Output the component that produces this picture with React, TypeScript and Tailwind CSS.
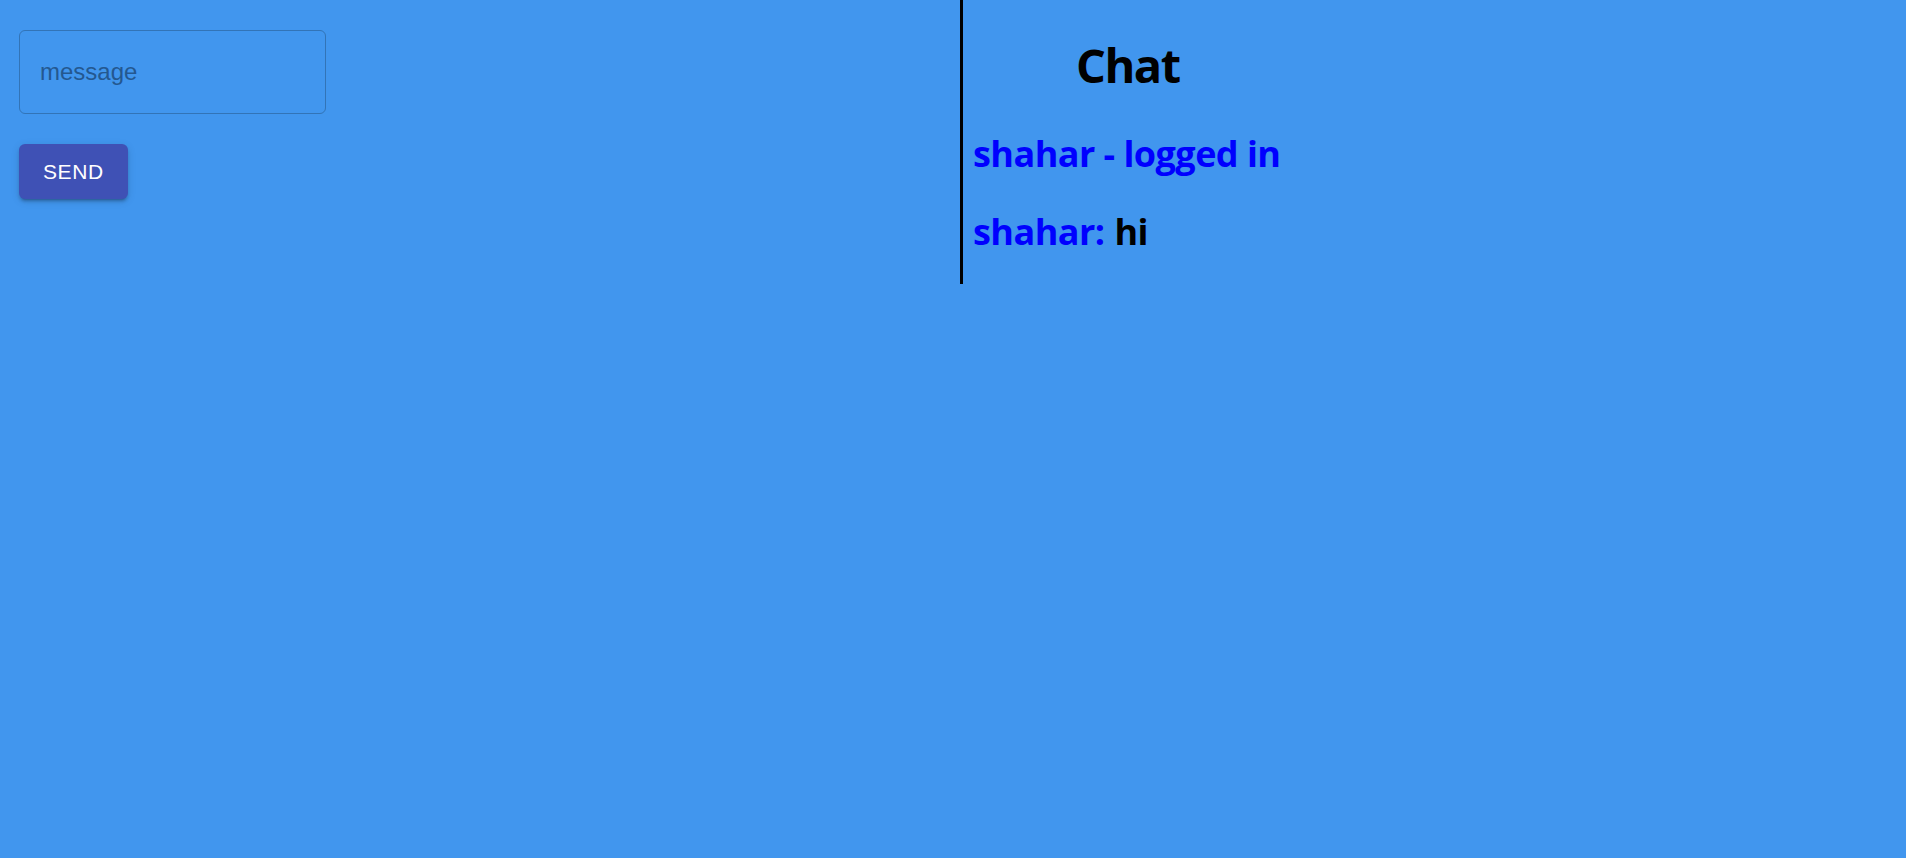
import { useState } from 'react'

export default function App() {
  const [message, setMessage] = useState('')

  return (
    <div className="min-h-screen bg-[#4196ee] flex items-start">
      {/* left: compose */}
      <div className="w-[960px] shrink-0 pt-[30px] pl-[19px] flex flex-col items-start gap-[30px]">
        <input
          value={message}
          onChange={(e) => setMessage(e.target.value)}
          placeholder="message"
          className="w-[307px] h-[84px] rounded-[6px] border border-[#3274b7] bg-transparent pl-[20px] text-[24px] text-black placeholder:text-[#245890] outline-none font-['Liberation_Sans',Arial,sans-serif]"
        />
        <button className="h-[55px] px-[24px] rounded-[6px] bg-[#3f51b5] text-white text-[21px] tracking-[0.6px] uppercase font-['Liberation_Sans',Arial,sans-serif] shadow-[0_4px_2px_-3px_rgba(0,0,0,0.2),0_3px_3px_0_rgba(0,0,0,0.14),0_2px_8px_0_rgba(0,0,0,0.12)]">
          Send
        </button>
      </div>

      {/* right: chat log */}
      <div className="border-l-[3px] border-black pl-[10px] pb-[30px] font-['Open_Sans',sans-serif] font-bold">
        <h1 className="mt-[37px] ml-[103px] text-[47px] leading-[56px] tracking-[-1.5px] text-black">Chat</h1>
        <h2 className="mt-[39px] text-[36px] leading-[44px] tracking-[-0.55px] text-[#0000ff]">shahar - logged in</h2>
        <h2 className="mt-[34px] text-[36px] leading-[44px] tracking-[-0.55px] text-[#0000ff]">
          shahar:<span className="ml-[10px] text-black">hi</span>
        </h2>
      </div>
    </div>
  )
}
